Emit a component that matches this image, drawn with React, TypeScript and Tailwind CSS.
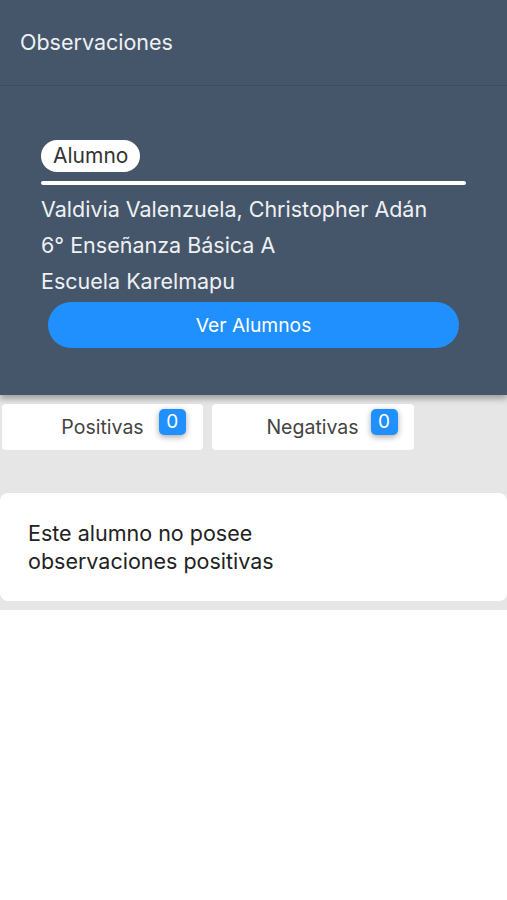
import React from "react";

export default function App() {
  return (
    <div
      className="w-[507px] h-[900px] bg-white flex flex-col"
      style={{ fontFamily: "Inter, 'Liberation Sans', sans-serif" }}
    >
      <div className="bg-[#46566a] relative z-10 shadow-[0_4px_6px_rgba(0,0,0,0.3)]">
        <div className="h-[86px] flex items-center px-[20px] border-b border-[#3d4c5e]">
          <span className="text-[21.5px] text-[#eef1f4]">Observaciones</span>
        </div>
        <div className="px-[41px] pt-[54px] pb-[47px] flex flex-col">
          <div className="flex">
            <span className="bg-white rounded-full h-[32px] px-[12px] flex items-center text-[21px] text-[#333]">
              Alumno
            </span>
          </div>
          <div className="mt-[9px] h-[4px] w-[425px] bg-white rounded-full" />
          <div className="mt-[6px] flex flex-col text-[21.5px] text-[#eef1f4] leading-[36px]">
            <span>Valdivia Valenzuela, Christopher Adán</span>
            <span>6° Enseñanza Básica A</span>
            <span>Escuela Karelmapu</span>
          </div>
          <div className="mt-[3px] ml-[7px] w-[411px] h-[46px] rounded-full bg-[#1f90fe] flex items-center justify-center text-[19.3px] text-white">
            Ver Alumnos
          </div>
        </div>
      </div>
      <div className="bg-[#e6e6e6] pt-[9px] pb-[9px]">
        <div className="flex gap-[9px] pl-[2px]">
          <div className="w-[201px] h-[46px] bg-white rounded-[4px] flex items-center justify-center gap-[15px] pl-[42px]">
            <span className="text-[19.5px] text-[#444] mt-[2px]">Positivas</span>
            <span className="w-[27px] h-[26px] -mt-[10px] rounded-[5px] bg-[#1f90fe] text-white text-[19px] flex items-center justify-center shadow-[0_2px_6px_rgba(0,0,0,0.35)]">
              0
            </span>
          </div>
          <div className="w-[202px] h-[46px] bg-white rounded-[4px] flex items-center justify-center gap-[12px] pl-[38px]">
            <span className="text-[19.5px] text-[#444] mt-[2px]">Negativas</span>
            <span className="w-[27px] h-[26px] -mt-[10px] rounded-[5px] bg-[#1f90fe] text-white text-[19px] flex items-center justify-center shadow-[0_2px_6px_rgba(0,0,0,0.35)]">
              0
            </span>
          </div>
        </div>
        <div className="mt-[43px] h-[108px] bg-white rounded-[8px] px-[28px] flex flex-col justify-center text-[21.5px] text-[#222] leading-[28px]">
          <span>Este alumno no posee</span>
          <span>observaciones positivas</span>
        </div>
      </div>
    </div>
  );
}
